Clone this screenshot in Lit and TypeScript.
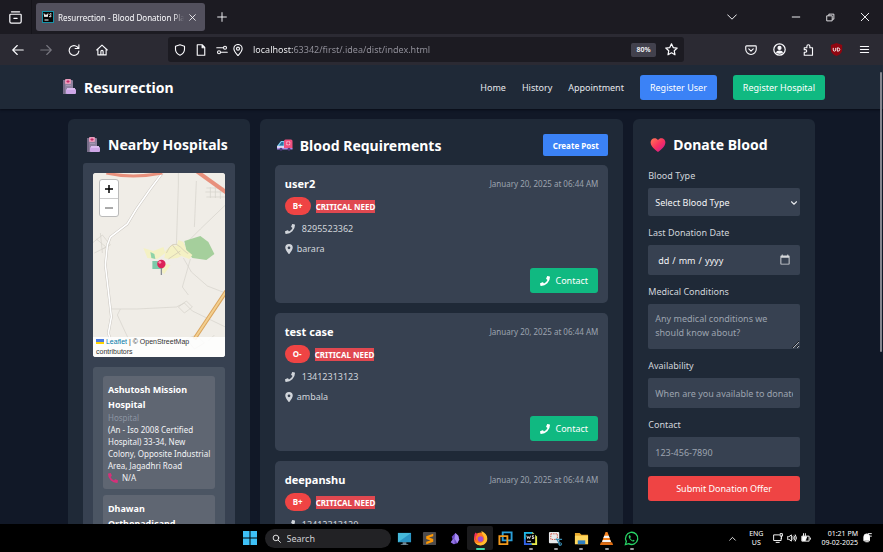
import { LitElement, html, css, svg } from "lit";
import { customElement, property } from "lit/decorators.js";

interface Post {
  name: string;
  group: string;
  phone: string;
  place: string;
  posted: string;
}

const posts: Post[] = [
  { name: "user2", group: "B+", phone: "8295523362", place: "barara", posted: "January 20, 2025 at 06:44 AM" },
  { name: "test case", group: "O-", phone: "13412313123", place: "ambala", posted: "January 20, 2025 at 06:44 AM" },
  { name: "deepanshu", group: "B+", phone: "13412313120", place: "ambala", posted: "January 20, 2025 at 06:44 AM" },
];

const hospitals = [
  {
    name: "Ashutosh Mission Hospital",
    address: "(An - Iso 2008 Certified Hospital) 33-34, New Colony, Opposite Industrial Area, Jagadhri Road",
    phone: "N/A",
  },
  { name: "Dhawan Orthopadicand Hospital", address: "Jagadhri Road", phone: "N/A" },
];

const handset = svg`<path fill="currentColor" d="M15.5.8 12.3 0a.8.8 0 0 0-.9.4L9.900 3.900a.8.8 0 0 0 .2.9l1.900 1.500A11.500 11.500 0 0 1 6.400 12L4.800 10.100a.8.8 0 0 0-.9-.2L.4 11.400a.8.8 0 0 0-.4.9l.8 3.100c.1.400.4.600.8.600A14.400 14.400 0 0 0 16 1.600c0-.4-.2-.7-.5-.8z"/>`;

const phoneIcon = html`<svg class="ic10" viewBox="0 0 16 16" aria-hidden="true">${handset}</svg>`;

const pinIcon = html`<svg class="pin" viewBox="0 0 12 16" aria-hidden="true">
  <path fill="currentColor" fill-rule="evenodd" d="M6 0a6 6 0 0 1 6 6c0 2.400-3 6.800-5.200 9.600a1 1 0 0 1-1.600 0C3 12.800 0 8.400 0 6a6 6 0 0 1 6-6zm0 3.800a2.200 2.200 0 1 0 0 4.400 2.200 2.200 0 0 0 0-4.400z"/>
</svg>`;

const hospitalIcon = html`<svg class="ic16" viewBox="0 0 16 16" aria-hidden="true">
  <rect x="2" y="1" width="10" height="14" rx="1" fill="#8f829f"/>
  <rect x="2" y="1" width="2" height="14" fill="#776c88"/>
  <rect x="4" y="0" width="6" height="5" rx="1" fill="#e79aba"/>
  <path d="M7 1v3M5.500 2.500h3" stroke="#c42a68"/>
  <path d="M5 6.500h5" stroke="#a598b4"/>
  <rect x="5" y="10" width="10" height="5" rx="1" fill="#cda6e6"/>
  <rect x="6" y="9" width="8" height="2" fill="#dcbcf0"/>
</svg>`;

const ambulanceIcon = html`<svg class="ic16" viewBox="0 0 16 16" aria-hidden="true">
  <path d="M0 9 4 4h4v8H0z" fill="#7fd0f5"/>
  <path d="M2 8.500 4.500 5H6.500v3.500z" fill="#2d6f9e"/>
  <rect x="7" y="2.500" width="8.500" height="9.500" rx="1.500" fill="#f0507f"/>
  <rect x="9.200" y="4.200" width="4" height="4" rx="1" fill="#f9b6cb"/>
  <path d="M11.200 4.700v3M9.700 6.200h3" stroke="#e03368"/>
  <path d="M0 9h7v3H0z" fill="#dcd6f2"/>
  <path d="M0 11h15.500v1.500H0z" fill="#a98ae8"/>
  <circle cx="4" cy="12.300" r="1.500" fill="#4b3a78"/><circle cx="12" cy="12.300" r="1.500" fill="#4b3a78"/>
</svg>`;

const heartIcon = html`<svg class="ic16" viewBox="0 0 16 16" aria-hidden="true">
  <defs><linearGradient id="h" x1="0" y1="0" x2="1" y2="1"><stop offset="0" stop-color="#ff7a55"/><stop offset=".5" stop-color="#f8315f"/><stop offset="1" stop-color="#c4179a"/></linearGradient></defs>
  <path fill="url(#h)" d="M8 3.200C6.600.9 3.400.7 1.700 2.600.2 4.300.3 7 1.700 8.900 3.300 11.200 5.800 13.500 8 15c2.200-1.500 4.700-3.800 6.300-6.100 1.400-1.900 1.500-4.600 0-6.300C12.600.7 9.400.9 8 3.200z"/>
</svg>`;

const base = css`
  * { box-sizing: border-box; }
  h1, h2, h3, p { margin: 0; }
  button, input, select, textarea { font: inherit; color: inherit; margin: 0; border: 0; outline: 0; }
  button { display: flex; align-items: center; justify-content: center; padding: 0; background: none; }
  svg { display: block; flex: none; }
  .ic10 { width: 10px; height: 10px; }
  .ic16 { width: 16px; height: 16px; }
  .pin { width: 8px; height: 10px; }
`;

@customElement("blood-post")
export class BloodPost extends LitElement {
  @property({ attribute: false }) post!: Post;

  static styles = [
    base,
    css`
      :host {
        display: flex; flex-direction: column; flex: none; height: 138px; padding: 10px;
        background: #374151; border-radius: 5px; color: #d1d5db;
      }
      .top { display: flex; justify-content: space-between; }
      .name { font-size: 11px; line-height: 18px; color: #fff; }
      .date { font-size: 8px; line-height: 17px; color: #9ca3af; }
      .tags { display: flex; align-items: center; gap: 5px; margin-top: 4px; font-size: 8px; font-weight: 700; color: #fff; }
      .group { padding: 0 8px; line-height: 18px; border-radius: 9px; background: #ef4444; }
      .need { line-height: 13px; background: #e04850; }
      .line { display: flex; align-items: center; line-height: 20px; }
      .phone { gap: 7px; margin-top: 4px; }
      .place { gap: 4px; }
      .contact {
        align-self: flex-end; gap: 5px; margin-top: auto; width: 68px; height: 25px;
        border-radius: 3px; background: #10b981; color: #fff;
      }
    `,
  ];

  render() {
    const p = this.post;
    return html`
      <div class="top"><h3 class="name">${p.name}</h3><time class="date">${p.posted}</time></div>
      <div class="tags"><span class="group">${p.group}</span><span class="need">CRITICAL NEED</span></div>
      <div class="line phone">${phoneIcon}<span>${p.phone}</span></div>
      <div class="line place">${pinIcon}<span>${p.place}</span></div>
      <button class="contact">${phoneIcon}<span>Contact</span></button>
    `;
  }
}

@customElement("area-map")
export class AreaMap extends LitElement {
  static styles = [
    base,
    css`
      :host { display: block; position: relative; height: 184px; flex: none; overflow: hidden; border-radius: 3px; background: #f0ede7; }
      .tiles { width: 100%; height: 100%; }
      .zoom { position: absolute; left: 6px; top: 6px; width: 20px; border: 1px solid #bbb; border-radius: 3px; background: #fff; overflow: hidden; }
      .zoom button { width: 100%; height: 18px; color: #000; }
      .zoom button + button { border-top: 1px solid #ccc; color: #555; }
      .credit {
        position: absolute; left: 0; right: 0; bottom: 0; padding: 0 3px; background: rgba(255, 255, 255, 0.85);
        color: #333; font: 7px/10px "Liberation Sans", Arial, sans-serif;
      }
      .credit a { color: #0078a8; text-decoration: none; }
      .flag { display: inline-block; width: 8px; height: 5px; }
    `,
  ];

  render() {
    return html`
      <svg class="tiles" viewBox="0 0 133 184" preserveAspectRatio="xMidYMid slice" role="img" aria-label="Map">
        <rect width="133" height="184" fill="#f0ede7"/>
        <g fill="none" stroke="#d6d2cc" stroke-width=".7">
          <path d="M86 0v12l-2 60M104 8l-2 46M133 32 108 56l-20 20M133 120l-18-7-16-14-8-14M98 86l-8 28 6 8M18 136h26l40-2 8-4 8 8 33 16M28 136l-3 6 12 26M0 182l18-6"/>
          <path d="M0 70l10-8 8 10-8 4M2 80l12-6M4 66l12 10M8 60l2 20M86 134l8-6 6 6-8 6z"/>
          <path d="M114 15h18M113 19h20M114 24h19M118 14v11M123 14v11M128 14v12"/>
          <path d="M94 166l10-4 8 8-10 6zM116 168l6-6"/>
        </g>
        <path d="M70 0 58 16 44 36 35 51 18 64 15 72l-2 20 3 26 3 26-3 16 3 10-3 10" fill="none" stroke="#cbc7c1" stroke-width="2.600"/>
        <path d="M70 0 58 16 44 36 35 51 18 64 15 72l-2 20 3 26 3 26-3 16 3 10-3 10" fill="none" stroke="#fff" stroke-width="1.600"/>
        <path d="M14 0q26 6 56 0" fill="none" stroke="#e8907c" stroke-width="3"/>
        <path d="M104-2 136 21" fill="none" stroke="#e8907c" stroke-width="4"/>
        <path d="M134 118 106 160l-4 6" fill="none" stroke="#d9a35c" stroke-width="4"/>
        <path d="M134 118 106 160l-4 6" fill="none" stroke="#f3cf8f" stroke-width="2"/>
        <path d="m92 68 16-5 8 6 6 12-8 6-14-2-6-7z" fill="#a5cf9c"/>
        <path d="m51 75 10 3 10-4 2 6-8 6-10-1zM73 78l6-6 5 1 2-6 5 2 3 8 6 5-3 4-8-3-4 2-9 1-4-1zM70 90l8 2-6 9-3-2z" fill="#f4f1c4"/>
        <g fill="none" stroke="#d3ccb4" stroke-width=".8"><path d="M74 80q6-14 14-6t8 6M80 72l8 10M76 86l12-8"/></g>
        <path d="m58 79 4 2 1 5-4-1z" fill="#8fd3a8"/>
        <path d="M60 88h10v8H60z" fill="#7cc9a9"/>
        <path d="M69 92v10" stroke="#8a8f94" stroke-width="1.300"/>
        <circle cx="69" cy="91" r="4.200" fill="#dc2358"/>
        <circle cx="67.500" cy="89.300" r="1.400" fill="#ff8fae"/>
      </svg>
      <div class="zoom">
        <button aria-label="Zoom in"><svg width="8" height="8" viewBox="0 0 8 8"><path d="M4 0v8M0 4h8" stroke="currentColor" stroke-width="1.500"/></svg></button>
        <button aria-label="Zoom out"><svg width="8" height="8" viewBox="0 0 8 8"><path d="M0 4h8" stroke="currentColor"/></svg></button>
      </div>
      <div class="credit">
        <svg class="flag" viewBox="0 0 8 5"><path fill="#4c7be1" d="M0 0h8v3H0z"/><path fill="#ffd500" d="M0 3h8v2H0z"/></svg>
        <a href="#leaflet">Leaflet</a> | © OpenStreetMap <span>contributors</span>
      </div>
    `;
  }
}

const stroke = (d: unknown, size = 12, label?: string) => {
  const art = html`<svg width=${size} height=${size} viewBox="0 0 16 16" fill="none" stroke="currentColor" stroke-width="1.500" stroke-linecap="round" stroke-linejoin="round" aria-hidden="true">${d}</svg>`;
  return label ? html`<button class="tool" aria-label=${label}>${art}</button>` : art;
};

@customElement("app-root")
export class AppRoot extends LitElement {
  static styles = [
    base,
    css`
      :host {
        display: flex; flex-direction: column; height: 100vh; overflow: hidden; background: #111827; color: #e5e7eb;
        font: 9px/13px "Noto Sans", "Open Sans", sans-serif;
      }
      a { color: inherit; text-decoration: none; }

      .tabs { display: flex; align-items: center; flex: none; height: 34px; background: #1c1b22; color: #fbfbfe; }
      .recent { display: flex; justify-content: center; width: 32px; height: 34px; align-items: center; border-right: 1px solid #15141a; }
      .tab { display: flex; align-items: center; gap: 4px; width: 169px; height: 28px; margin-left: 4px; padding: 0 8px 0 6px; border-radius: 3px; background: #52505d; font-size: 8px; }
      .tab-title { flex: 1; min-width: 0; overflow: hidden; white-space: nowrap; mask-image: linear-gradient(90deg, #000 92%, transparent); }
      .new { margin-left: 12px; }
      .window { display: flex; align-items: center; margin-left: auto; padding-right: 13px; gap: 25px; }
      .window .list { margin-right: 29px; }

      .bar { display: flex; align-items: center; flex: none; height: 31px; background: #2b2a33; color: #fbfbfe; }
      .group { display: flex; align-items: center; gap: 16px; padding: 0 13px 0 12px; }
      .group.start { width: 168px; }
      .group.end { width: 199px; justify-content: flex-end; }
      .dim { color: #77767f; }
      .url { display: flex; align-items: center; flex: 1; min-width: 0; gap: 9px; height: 25px; padding: 0 6px; border-radius: 3px; background: #1c1b22; }
      .pair { display: flex; gap: 4px; }
      .address {
        flex: 1; min-width: 0; height: 20px; padding: 0; -webkit-text-fill-color: transparent;
        background: linear-gradient(90deg, #fbfbfe 41px, #96959f 41px) text;
      }
      .zoomed { width: 25px; height: 14px; border-radius: 2px; background: #42414d; font-size: 7px; font-weight: 600; }

      .page { display: flex; flex-direction: column; flex: 1; min-height: 0; position: relative; overflow: hidden; }
      .thumb { position: absolute; right: 1px; top: 7px; width: 2px; height: 61%; border-radius: 1px; background: #85868f; }
      .site { display: flex; align-items: center; flex: none; height: 44px; padding: 0 58px 0 61px; background: #1f2937; box-shadow: 0 1px 2px #080c16; }
      .brand { display: flex; align-items: center; gap: 7px; font-size: 14px; line-height: 21px; color: #fff; }
      .nav { display: flex; align-items: center; gap: 16px; margin-left: auto; }
      .solid { padding: 0 10px; height: 25px; border-radius: 3px; color: #fff; }
      .blue { background: #3b82f6; }
      .green { background: #10b981; }
      .red { background: #ef4444; }

      .columns { display: grid; grid-template-columns: minmax(0, 1fr) minmax(0, 2fr) minmax(0, 1fr); gap: 10px; flex: 1; min-height: 0; padding: 10px 68px 0; }
      .panel { display: flex; flex-direction: column; min-height: 0; overflow: hidden; padding: 15px 15px 0; border-radius: 6px 6px 0 0; background: #1f2937; }
      .title { display: flex; align-items: center; justify-content: flex-start; gap: 7px; padding-left: 2px; font-size: 14px; line-height: 21px; white-space: nowrap; color: #fff; }

      .well { display: flex; flex-direction: column; gap: 10px; flex: 1; min-height: 0; margin-top: 8px; padding: 10px 10px 0; border-radius: 3px 3px 0 0; background: #374151; }
      .hospitals { display: flex; flex-direction: column; gap: 6px; flex: 1; min-height: 0; overflow: hidden; padding: 9px 10px 0; border-radius: 3px 3px 0 0; background: #4b5563; }
      .hospital { flex: none; padding: 6px 0 5px 5px; border-radius: 3px; background: #5f6672; font-size: 8px; line-height: 12px; color: #f3f4f6; }
      .hospital-name { padding-right: 5px; font-size: 9px; line-height: 15px; color: #fff; }
      .kind { color: #8d95a3; }
      .call { display: flex; align-items: center; gap: 4px; }
      .call svg { color: #d6307a; transform: scaleX(-1); }

      .head { display: flex; align-items: center; justify-content: space-between; height: 22px; }
      .create { width: 65px; height: 22px; border-radius: 2px; font-size: 8px; font-weight: 700; color: #fff; }
      .posts { display: flex; flex-direction: column; gap: 10px; margin-top: 9px; }

      .form { display: flex; flex-direction: column; margin-top: 8px; color: #d1d5db; }
      .form label { height: 25px; line-height: 25px; }
      .field { width: 100%; height: 30px; margin-bottom: 4px; padding: 0 7px; border-radius: 2px; background-color: #374151; color: #f3f4f6; color-scheme: dark; }
      .field::placeholder { color: #9ca3af; }
      .pick { position: relative; }
      .pick svg { position: absolute; right: 2px; top: 11px; pointer-events: none; color: #e5e7eb; }
      select.field { display: block; height: 28px; appearance: none; }
      textarea.field { height: 45px; padding: 8px 7px; line-height: 14px; resize: vertical; overflow: hidden; }
      .field[type="date"] { padding: 0 9px; }
      .field::-webkit-calendar-picker-indicator { width: 12px; height: 12px; padding: 0; opacity: 0.8; }
      .field::-webkit-datetime-edit-fields-wrapper { display: grid; grid-template-columns: repeat(5, auto); justify-content: start; align-items: center; }
      .field::-webkit-datetime-edit-day-field { grid-area: 1 / 1; }
      .field::-webkit-datetime-edit-month-field { grid-area: 1 / 3; }
      .field::-webkit-datetime-edit-year-field { grid-area: 1 / 5; }
      .field::-webkit-datetime-edit-text { grid-row: 1; padding: 1px 2px; }
      .submit { width: 100%; margin-top: 5px; }

      .task { display: grid; grid-template-columns: 1fr auto 1fr; align-items: center; flex: none; height: 28px; background: #000; color: #fff; }
      .dock { grid-column: 2; display: flex; align-items: center; gap: 8px; padding-left: 4px; }
      .find { display: flex; align-items: center; gap: 6px; width: 126px; height: 19px; padding: 0 7px; border-radius: 10px; background: #222225; }
      .find input { flex: 1; min-width: 0; padding: 0; background: none; }
      .find input::placeholder { color: #d0d0d4; }
      .apps { display: flex; width: 253px; margin-left: -7px; }
      .app { position: relative; flex: 1; height: 24px; }
      .app.open::after { content: ""; position: absolute; bottom: 0; width: 4px; height: 2px; border-radius: 1px; background: #9a9a9e; }
      .app.active { background: #1b1b1d; border-radius: 2px; }
      .app.active::after { width: 9px; background: #3fd6a4; }
      .tray { display: flex; align-items: center; justify-content: flex-end; gap: 4px; padding-right: 11px; font-size: 7px; line-height: 9px; text-align: center; }
      .lang { margin: 0 6px 0 8px; }
      .clock { margin-left: 6px; text-align: right; white-space: nowrap; }
    `,
  ];

  private chrome() {
    return html`
      <div class="tabs">
        <div class="recent">${stroke(svg`<path d="M3 1h10M2 4h12a1 1 0 0 1 1 1v8a2 2 0 0 1-2 2H3a2 2 0 0 1-2-2V5a1 1 0 0 1 1-1zM6 9h4"/>`, 13, "Recent tabs")}</div>
        <div class="tab">
          <svg width="12" height="12" viewBox="0 0 24 24" aria-hidden="true"><rect width="24" height="24" fill="#1592a8"/><rect x="2" y="2" width="20" height="20" fill="#050505"/><path d="m4 5 2 7 2-5 2 5 2-7M19 6c-3-2-5 1-2 2.500s1 4-3 2.500M5 18h8" fill="none" stroke="#fff" stroke-width="2"/></svg>
          <span class="tab-title">Resurrection - Blood Donation Platform</span>
          ${stroke(svg`<path d="m3 3 10 10M13 3 3 13"/>`, 9, "Close tab")}
        </div>
        <div class="new">${stroke(svg`<path d="M8 1v14M1 8h14"/>`, 10, "New tab")}</div>
        <div class="window">
          <span class="list">${stroke(svg`<path d="m1 4.500 7 7 7-7"/>`, 10, "List all tabs")}</span>
          ${stroke(svg`<path d="M2 8h12"/>`, 10, "Minimise")}
          ${stroke(svg`<path d="M2 5h9v9H2zM5 4V2h9v9h-2"/>`, 9, "Restore")}
          ${stroke(svg`<path d="m2 2 12 12M14 2 2 14"/>`, 10, "Close")}
        </div>
      </div>
      <div class="bar">
        <div class="group start">
          ${stroke(svg`<path d="M15 8H1m6-6L1 8l6 6"/>`, 12, "Back")}
          <span class="dim">${stroke(svg`<path d="M1 8h14M9 2l6 6-6 6"/>`, 12, "Forward")}</span>
          ${stroke(svg`<path d="M14.500 1v5h-5M14 6a6.500 6.500 0 1 0 .5 3.500"/>`, 12, "Reload")}
          ${stroke(svg`<path d="m1 8 7-6.500L15 8M2.500 7v7.500h11V7M6.500 14v-4a1.500 1.500 0 0 1 3 0v4"/>`, 12, "Home")}
        </div>
        <div class="url">
          ${stroke(svg`<path d="M8 1 2 3v4c0 4 2.500 6.500 6 8 3.500-1.500 6-4 6-8V3z"/>`)}
          ${stroke(svg`<path d="M3 1h6.500L13 4.500V15H3zM9.500 1v4H13"/>`)}
          <span class="pair">
            ${stroke(svg`<path d="M1 5h8M15 11H7"/><circle cx="12" cy="5" r="2"/><circle cx="4" cy="11" r="2"/>`)}
            ${stroke(svg`<path d="M8 15.500C5 12 2.500 9.500 2.500 6.200a5.500 5.500 0 0 1 11 0C13.500 9.500 11 12 8 15.500z"/><circle cx="8" cy="6.200" r="2"/>`)}
          </span>
          <input class="address" aria-label="Address" .value=${"localhost:63342/first/.idea/dist/index.html"}>
          <button class="zoomed">80%</button>
          ${stroke(svg`<path d="m8 1 2.100 4.600 4.900.6-3.600 3.400.9 4.900L8 12.100l-4.300 2.400.9-4.900L1 6.200l4.900-.6z"/>`, 13, "Bookmark")}
        </div>
        <div class="group end">
          ${stroke(svg`<path d="M2 2.500h12a1 1 0 0 1 1 1V7a7 7 0 0 1-14 0V3.500a1 1 0 0 1 1-1zM5 6.500l3 3 3-3"/>`, 12, "Pocket")}
          ${stroke(svg`<circle cx="8" cy="8" r="7"/><circle cx="8" cy="6" r="1.800" fill="currentColor"/><path d="M4.500 11.500c1-2 6-2 7 0-1.500 1.500-5.500 1.500-7 0z" fill="currentColor"/>`, 13, "Account")}
          ${stroke(svg`<path d="M3 15h11V5h-3.500V3a2 2 0 0 0-4 0v2H3v2.500h1.500a1.700 1.700 0 0 1 0 3.500H3z"/>`, 12, "Extensions")}
          <button aria-label="Ad blocker"><svg width="13" height="13" viewBox="0 0 16 16"><path d="M8 0 1 2.500V8c0 4 3 6.500 7 8 4-1.500 7-4 7-8V2.500z" fill="#8f0610"/><path d="M4 6v2.500a1.500 1.500 0 0 0 3 0V6M9 6h1a2 2 0 0 1 0 4H9z" fill="none" stroke="#fff" stroke-width="1.100"/></svg></button>
          ${stroke(svg`<path d="M2 3.500h12M2 8h12M2 12.500h12"/>`, 11, "Menu")}
        </div>
      </div>
    `;
  }

  private hospitalsPanel() {
    return html`<section class="panel">
      <h2 class="title">${hospitalIcon}Nearby Hospitals</h2>
      <div class="well">
        <area-map></area-map>
        <div class="hospitals">
          ${hospitals.map((h) => html`<article class="hospital">
            <h3 class="hospital-name">${h.name}</h3>
            <p class="kind">Hospital</p>
            <p>${h.address}</p>
            <p class="call"><svg class="ic10" viewBox="0 0 16 16">${handset}</svg>${h.phone}</p>
          </article>`)}
        </div>
      </div>
    </section>`;
  }

  private donateForm() {
    return html`<section class="panel">
      <h2 class="title">${heartIcon}Donate Blood</h2>
      <form class="form">
        <label for="type">Blood Type</label>
        <div class="pick">
          <select class="field" id="type"><option>Select Blood Type</option><option>B+</option><option>O-</option></select>
          ${stroke(svg`<path d="m3 5.500 5 5 5-5" stroke-width="2.200"/>`, 8)}
        </div>
        <label for="date">Last Donation Date</label>
        <input class="field" id="date" type="date">
        <label for="cond">Medical Conditions</label>
        <textarea class="field" id="cond" placeholder="Any medical conditions we should know about?"></textarea>
        <label for="avail">Availability</label>
        <input class="field" id="avail" placeholder="When are you available to donate?">
        <label for="tel">Contact</label>
        <input class="field" id="tel" type="tel" placeholder="123-456-7890">
        <button class="solid red submit" type="button">Submit Donation Offer</button>
      </form>
    </section>`;
  }

  private taskbar() {
    const apps: [string, string, unknown][] = [
      ["Desktop", "", svg`<path d="M1 2h14v10H1z" fill="#2a94c4"/><path d="M1 2h14L1 12z" fill="#45b9da"/><path d="M6 12h4v2H6zM4 14h8v1H4z" fill="#6f8896"/>`],
      ["Sublime Text", "", svg`<rect x="1" y="1" width="14" height="14" rx="1" fill="#4d4b4c"/><path d="M12 3 4.500 5.500v3L9 10l-4.500 1.500V14L12 11.500v-3L7.500 7 12 5.500z" fill="#ff9800"/>`],
      ["Obsidian", "", svg`<path d="m9 2-4 4 1 3-2 3 3 2 4-1 2-4-1-4z" fill="#6c4ac4"/><path d="M9 2 8 8l3 5 2-4-1-4z" fill="#a68bf2"/><path d="m6 9 2-1v6l-4-2z" fill="#8f73e0"/>`],
      ["Firefox", "open active", svg`<circle cx="8" cy="8.500" r="7" fill="#ff7a1f"/><path d="M9 0c5 2 7 6 6 10-2 6-10 7-13 2 4 2 9 1 10-3 .500-4-3-5-3-9z" fill="#ffbd2e"/><path d="M1.500 6C1 3 3 1.500 3 1.500L5 4c-2 1-3 4-1 6-2 0-3-2-2.500-4z" fill="#f5305c"/><circle cx="8" cy="8.500" r="3" fill="#a04bd0"/>`],
      ["VMware", "", svg`<path d="M5 1.500h9.500V10H5z" fill="none" stroke="#2b9fd9" stroke-width="2"/><path d="M1.500 5.500H10V14H1.500z" fill="none" stroke="#f39a1d" stroke-width="2"/>`],
      ["WebStorm", "open", svg`<path d="M1 1h9l5 5v9H5l-4-4z" fill="#1fb8e8"/><path d="M10 1l5 5v9H9z" fill="#e7ea4b"/><path d="M1 8v7h9z" fill="#3062e8"/><rect x="3" y="3" width="10" height="10" fill="#000"/><path d="m4 5 1 3 1-2 1 2 1-3M11.500 5H10v1.500h1.500V8H9.500M4.500 11h4" fill="none" stroke="#fff" stroke-width=".9"/>`],
      ["Snipping Tool", "open", svg`<rect x="1" y="1" width="11" height="12" rx="1" fill="#e9eaec"/><rect x="3" y="3" width="7" height="6" fill="none" stroke="#d04b3c" stroke-dasharray="1.500 1"/><path d="m8 9 7 0M9 8l4 7" stroke="#3a8fb5" stroke-width="1.400"/><circle cx="13" cy="14" r="1.500" fill="none" stroke="#3a8fb5"/>`],
      ["Files", "open", svg`<path d="M1 2h5l2 2h7v10H1z" fill="#e8a92c"/><path d="M1 5h14v9H1z" fill="#ffd75e"/><path d="M4 10h8v4H4z" fill="#2f7fc2"/>`],
      ["VLC", "open", svg`<path d="M7 1h2l4 11H3z" fill="#f58220"/><path d="m5.600 5-1 2.500h6.800l-1-2.500zM4 9.500l-.8 2.500h9.600L12 9.500z" fill="#f5f5f5"/><path d="M2 12h12l1 3H1z" fill="#e06c10"/>`],
      ["WhatsApp", "open", svg`<path d="M1.500 14.500 2.500 11a6.500 6.500 0 1 1 2.500 2.500z" fill="none" stroke="#27d366" stroke-width="1.400"/><path d="M5.500 4.500c-1 1-.5 3 1.200 4.800S10.500 12 11.500 10.500L10 9.200l-1 .8C8 9.500 7 8.500 6.500 7.500l.8-1-.8-2z" fill="#27d366"/>`],
    ];
    return html`<footer class="task">
      <div class="dock">
        <button aria-label="Start"><svg width="14" height="14" viewBox="0 0 14 14"><path fill="#3ec1f7" d="M0 0h6.500v6.500H0zM7.500 0H14v6.500H7.500zM0 7.500h6.500V14H0zM7.500 7.500H14V14H7.500z"/></svg></button>
        <label class="find">${stroke(svg`<circle cx="7" cy="7" r="5"/><path d="m11 11 4 4"/>`, 9)}<input type="text" placeholder="Search" aria-label="Search"></label>
        <div class="apps">
          ${apps.map(([name, state, art]) => html`<button class="app ${state}" aria-label=${name}><svg width="15" height="15" viewBox="0 0 16 16">${art}</svg></button>`)}
        </div>
      </div>
      <div class="tray">
        ${stroke(svg`<path d="m3 11 5-5 5 5"/>`, 9, "Hidden icons")}
        <span class="lang">ENG<br>US</span>
        ${stroke(svg`<path d="M10 3H1v9h12V8M5 15h5M12 1h3v4h-3zM13.500 5v4"/>`, 10)}
        ${stroke(svg`<path d="M1 6h2l4-3v10l-4-3H1zM9.500 6q1.500 2 0 4M11.500 4.500q3 3.500 0 7M13.500 3q3.500 5 0 10"/>`, 10)}
        ${stroke(svg`<path d="M2 5h11v8H2zM15 8v2"/><path d="M3 6h6l-2 6H3zM4 1v3M7 1v3" fill="currentColor"/>`, 10)}
        <span class="clock">01:21 PM<br>09-02-2025</span>
        ${stroke(svg`<path d="M3 12V6a4 4 0 0 1 9 0v6zM6 14h4" fill="currentColor"/><path d="M10 1h5M11 5h4"/>`, 10)}
      </div>
    </footer>`;
  }

  render() {
    return html`
      ${this.chrome()}
      <div class="page">
        <header class="site">
          <h1 class="brand">${hospitalIcon}Resurrection</h1>
          <nav class="nav">
            <a href="#home">Home</a><a href="#history">History</a><a href="#appointment">Appointment</a>
            <button class="solid blue">Register User</button>
            <button class="solid green">Register Hospital</button>
          </nav>
        </header>
        <main class="columns">
          ${this.hospitalsPanel()}
          <section class="panel">
            <div class="head"><h2 class="title">${ambulanceIcon}Blood Requirements</h2><button class="create blue">Create Post</button></div>
            <div class="posts">${posts.map((p) => html`<blood-post .post=${p}></blood-post>`)}</div>
          </section>
          ${this.donateForm()}
        </main>
        <div class="thumb"></div>
      </div>
      ${this.taskbar()}
    `;
  }
}
